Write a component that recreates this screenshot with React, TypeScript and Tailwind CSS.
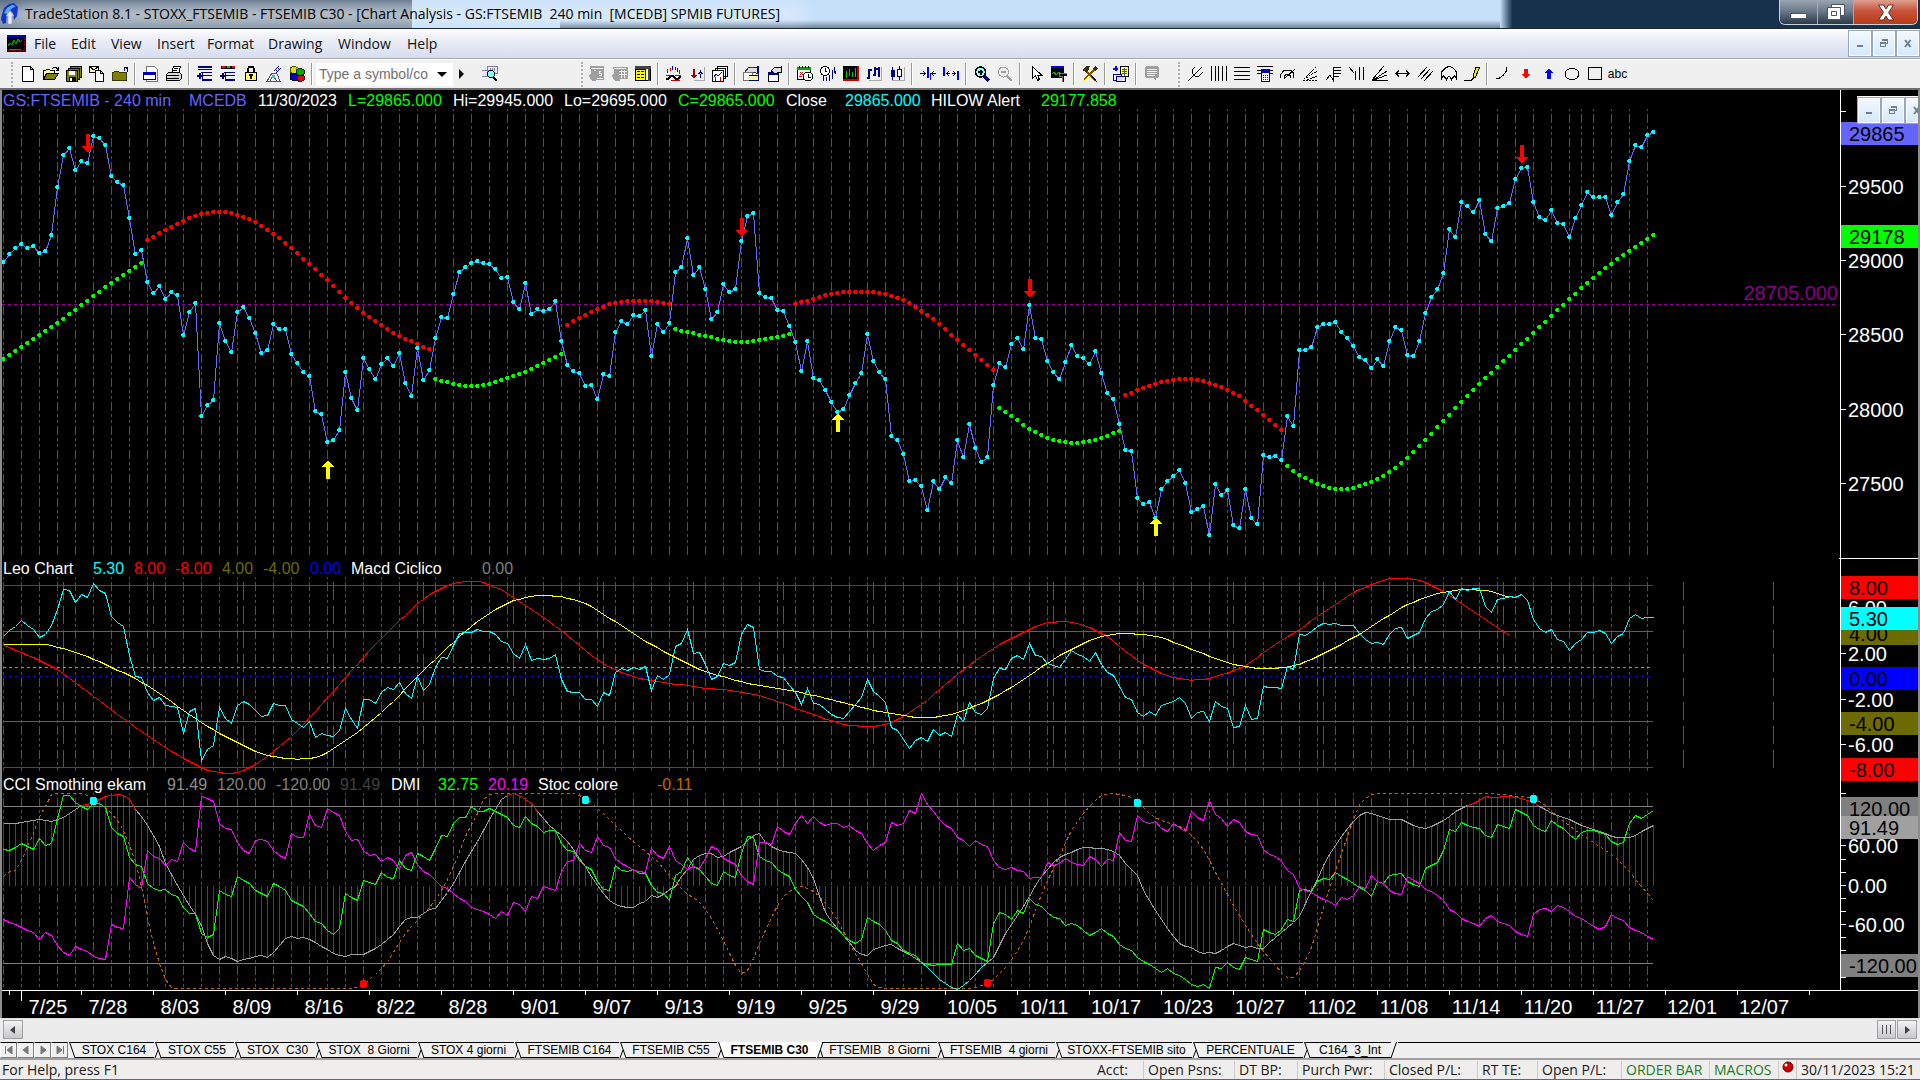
import React from "react";

/* ---------------------------------------------------------------- data */

const nums = (s: string) => s.trim().split(/\s+/).map(Number);

const CLOSE = nums(`
456 432 413 402 413 408 429 423 375 231 135 114 180 153 159 77 84 105 198 216 225 324 432 420 516 549 528 567 546 555
675 606 578 918 885 870 639 693 726 606 591 624 669 729 720 642 657 657 732 759 786 798 903 912 996 990 960 786 864 900
744 777 807 762 744 768 729 819 858 714 810 780 684 621 624 552 486 471 459 453 459 462 477 504 501 576 597 519 612 597
603 597 573 693 765 783 789 828 825 867 792 798 666 633 642 615 618 600 738 642 666 639 486 471 384 495 471 537 627 606
522 546 537 393 318 309 549 561 564 600 603 648 696 783 693 804 810 840 876 906 897 855 819 789 672 753 786 807 978 990
1032 1113 1110 1128 1200 1113 1137 1101 1119 990 1041 942 1014 1056 1041 825 759 771 702 684 717 585 684 687 753 786 807 756 705 738
744 762 723 789 849 867 942 1020 1023 1164 1182 1176 1224 1137 1113 1098 1080 1119 1206 1197 1188 1275 1122 1155 1140 1245 1254 1137 1224 1242
1035 1041 1038 1050 918 948 720 720 711 651 642 642 636 666 684 708 741 750 774 747 768 693 651 660 735 738 693 609 561 537
489 357 381 276 288 306 270 372 393 294 288 279 207 174 171 276 321 330 300 339 342 381 324 285 246 261 261 261 315 276
252 153 105 111 75 66`);

const HIGH_BANDS = [
  "24 390 27 360 30 333 33 312 36 306 38 309 39 315 42 336 45 372 48 414 51 462 54 510 57 564 60 609 63 645 66 678 69 702 71 717",
  "94 645 96 624 99 597 102 578 104 573 108 573 111 581",
  "132 581 135 567 138 552 141 546 145 546 148 558 150 570 153 603 156 642 159 690 162 735 165 780",
  "187 855 190 834 193 816 195 810 197 807 200 813 203 831 204 840 206 858 207 873 210 915 213 960",
].map(nums);

const LOW_BANDS = [
  "0 747 3 711 6 675 9 639 12 600 15 558 18 519 21 483 23 459",
  "72 807 75 822 77 828 79 828 81 822 84 804 87 786 90 759 93 732",
  "112 657 114 666 117 678 120 690 123 696 126 690 129 681 131 672",
  "166 894 168 918 171 957 174 984 176 993 178 999 180 996 183 984 186 963",
  "214 1068 216 1095 219 1122 221 1134 223 1137 225 1134 228 1116 231 1086 234 1044 237 990 240 933 243 876 246 822 249 771 252 720 255 669 258 618 261 567 264 519 267 474 271 423 275 375",
].map(nums);

const LEO = nums(`
241 223 211 193 209 222 245 236 210 160 102 105 140 117 124 84 106 113 182 200 212 300 362 363 410 434 424 448 450 455
533 466 457 613 580 568 455 486 502 447 437 445 463 480 478 443 447 447 489 503 515 495 545 531 539 542 524 457 489 517
431 429 442 408 393 399 378 411 428 361 403 384 336 306 308 270 234 229 231 222 226 227 237 256 262 292 309 265 315 309
312 309 295 370 406 410 408 431 429 452 410 417 350 339 344 336 341 332 402 357 371 356 272 263 222 294 291 326 370 360
322 328 320 237 206 216 341 345 345 361 363 387 410 446 396 442 444 459 475 485 486 466 446 425 370 405 421 438 515 523
550 577 554 545 557 521 538 528 542 475 497 438 468 474 456 367 338 342 308 299 312 263 300 301 322 330 336 310 283 295
302 316 291 325 348 359 390 424 429 470 481 465 479 449 443 436 423 441 488 468 467 497 435 450 456 515 510 448 491 486
390 393 393 396 331 340 237 240 228 212 203 207 204 210 208 210 232 250 262 259 265 235 217 215 249 240 229 188 167 162
146 108 130 98 104 99 98 152 171 130 128 122 125 117 134 190 217 231 220 250 256 284 262 252 231 231 225 232 264 242
234 188 177 189 184 184`);

const SLOW_CYCLE = nums(`
0 267 5 265 8 270 13 295 18 334 23 378 28 437 33 500 38 550 42 585 45 601 49 608 53 597 57 552 61 500 65 435 69 360 73 293
77 226 80 186 84 142 87 126 90 119 94 127 97 143 100 177 102 198 105 234 108 266 112 305 115 332 119 357 123 377 127 391
131 403 134 414 138 431 142 449 145 462 148 471 151 481 155 483 158 474 160 463 163 441 167 404 170 370 173 333 176 299
180 263 183 243 186 234 190 236 193 246 196 266 200 294 204 320 207 333 209 338 211 339 213 336 216 325 219 301 222 275
225 245 228 213 231 178 234 147 237 126 240 110 243 103 246 104 248 109 251 126`);

const FAST_CYCLE = nums(`
0 268 3 290 9 342 15 420 21 500 25 549 29 595 33 634 35 646 37 651 39 647 41 634 44 600 48 540 51 485 55 405 57 365 61 285
64 230 67 178 70 130 73 98 75 84 77 78 79 78 80 82 83 103 85 125 88 160 93 225 96 270 99 312 102 342 105 362 108 373
112 384 117 396 122 405 127 424 131 449 135 476 138 494 141 507 144 510 146 509 149 491 151 470 154 432 156 400 160 342
162 314 165 278 168 247 171 220 173 205 176 198 178 200 181 215 184 243 187 287 191 335 195 363 198 372 201 366 204 351
207 328 210 291 213 255 216 220 219 183 222 147 225 112 228 87 231 70 233 68 236 76 239 98 242 132 246 180 249 215 251 239`);

const CCI_KEYS = nums(`
0 802 3 798 6 790 8 794 10 782 13 748 15 738 17 719 19 715 20 718 21 728 22 758 24 805 26 870 27 920 29 985 31 1045 33 1105
34 1160 35 1195 36 1207 37 1198 38 1205 39 1212 40 1207 43 1196 44 1200 45 1185 47 1145 48 1139 49 1145 50 1142 51 1147
53 1167 55 1188 57 1199 58 1193 60 1193 61 1184 63 1162 65 1132 67 1087 69 1081 70 1070 71 1056 72 1055 73 1030 75 980
77 915 79 855 81 790 83 730 84 717 85 712 86 717 87 728 88 740 89 765 91 805 94 855 97 930 99 985 101 1030 102 1042
103 1048 105 1052 106 1039 107 1033 108 1017 109 1022 111 998 112 988 113 960 114 938 115 908 116 897 117 890 118 889
119 903 120 900 121 887 123 870 124 850 125 835 126 829 127 857 128 870 130 885 132 890 133 907 135 965 136 1020 137 1065
139 1115 141 1155 142 1180 144 1194 145 1176 146 1172 148 1163 149 1175 151 1193 153 1216 154 1230 156 1265 157 1279
159 1295 161 1268 163 1232 164 1217 165 1200 167 1130 169 1075 171 1020 172 985 174 938 176 903 178 888 180 873 182 874
184 878 186 897 187 920 189 957 190 1000 192 1060 194 1115 196 1158 198 1172 200 1190 201 1185 202 1190 204 1167 205 1160
207 1172 208 1168 210 1175 211 1155 213 1125 215 1095 216 1078 217 1040 218 1000 219 968 220 925 222 865 224 815 226 777
227 769 229 777 231 789 233 790 235 807 237 816 239 800 241 780 242 765 244 747 245 742 247 720 248 722 249 724 250 720
252 723 253 726 255 737 256 750 257 760 259 778 261 790 263 807 266 825 268 838 269 842 271 843 272 835 273 823 274 815 275 807`);

const DMI_PLUS = nums(`
877 880 872 861 870 878 846 867 860 785 716 716 738 750 760 740 742 752 812 830 840 902 922 930 980 995 1002 999 1012 1020
1052 1068 1068 1128 1140 1133 1002 1012 1020 958 970 980 1000 1011 1018 980 990 1000 1030 1040 1048 1070 1094 1100 1120 1132 1113 1010 1023 1030
972 976 984 948 963 965 910 935 941 890 900 911 875 835 838 800 784 783 749 765 766 755 765 775 783 805 813 780 800 810
828 820 822 860 880 884 910 930 938 975 997 1002 926 940 944 937 950 950 985 1007 1010 1030 957 945 902 928 937 958 980 985
944 955 961 890 838 843 900 910 916 938 950 960 997 1018 1037 1072 1085 1092 1105 1118 1135 1150 1158 1147 1080 1092 1103 1120 1150 1158
1180 1190 1196 1216 1222 1226 1222 1222 1222 1160 1179 1173 1195 1203 1213 1100 1067 1073 1088 1060 1068 1025 1043 1047 1067 1080 1085 1106 1100 1104
1120 1136 1125 1115 1130 1138 1162 1175 1180 1202 1214 1223 1235 1246 1233 1250 1256 1265 1280 1287 1280 1294 1230 1234 1217 1230 1237 1200 1208 1214
1118 1127 1133 1117 1088 1094 1000 998 1004 973 965 968 948 958 967 980 993 1000 1018 975 980 955 953 950 973 983 989 935 927 916
882 818 825 798 807 813 814 835 843 803 810 816 760 768 776 805 817 825 793 807 815 833 848 828 820 820 827 832 853 862
856 800 778 787 773 763`);

const DMI_MINUS = nums(`
1088 1096 1102 1112 1120 1125 1147 1127 1136 1165 1187 1194 1167 1178 1183 1197 1205 1206 1102 1110 1115 963 983 994 882 898 906 925 907 913
856 876 884 720 726 735 800 816 818 857 880 890 850 847 853 880 895 906 830 842 842 775 807 813 755 768 777 825 850 847
882 896 892 914 903 910 937 897 886 922 945 952 972 990 995 1010 1024 1033 1052 1058 1063 1072 1083 1063 1074 1037 1043 1063 1020 1024
988 995 1001 945 913 910 861 880 888 838 866 873 905 920 930 942 945 947 875 897 904 870 912 922 938 930 934 905 870 878
905 915 923 955 974 982 858 856 862 808 825 832 800 778 802 780 798 807 802 802 812 805 820 830 860 880 866 857 798 806
800 763 770 712 745 765 788 806 815 842 850 870 850 862 870 910 933 938 931 940 943 966 961 963 916 925 920 906 916 924
926 898 908 928 907 911 828 850 855 778 795 802 795 815 825 802 813 825 766 784 792 733 773 785 810 790 797 824 832 835
878 892 898 915 942 952 995 1002 1008 1018 1028 1034 1046 1023 1028 1017 990 996 956 975 980 1000 1010 1014 960 972 980 998 1005 1016
1030 1057 1065 1085 1092 1098 1109 1085 1074 1093 1100 1106 1123 1133 1137 1073 1058 1053 1064 1046 1050 1064 1077 1085 1095 1107 1117 1108 1071 1084
1090 1110 1120 1125 1138 1146`);

const STOCH = nums(`
0 960 1 945 2 940 3 910 4 870 5 830 6 780 7 750 8 715 9 712 13 712 15 725 16 740 18 770 20 820 21 865 22 915 23 990 24 1080
25 1160 26 1220 27 1265 28 1290 29 1294 58 1294 60 1280 63 1235 65 1185 67 1130 69 1090 71 1050 73 1000 75 930 77 840 79 770
80 730 81 715 83 712 95 712 97 725 99 755 102 805 106 870 109 915 112 975 114 1012 116 1035 118 1085 120 1150 122 1225
123 1250 124 1240 126 1160 128 1080 130 1020 132 993 133 990 135 1003 137 1040 139 1090 141 1160 143 1220 145 1280 147 1294
160 1294 164 1278 167 1230 170 1150 172 1060 174 970 176 900 178 820 181 750 183 718 185 712 187 716 189 735 191 770
193 793 196 808 198 835 200 878 203 980 206 1075 209 1160 212 1225 214 1262 215 1260 216 1240 218 1170 220 1050 222 940
224 840 226 745 228 715 229 712 248 712 252 720 255 725 257 748 259 780 262 820 265 858 268 893 271 945 273 990 275 1030`);

/* ---------------------------------------------------------------- geometry */

const bx = (i: number) => 3 + 6 * i;
const priceY = (v: number) => Math.round(110 + v / 3);
const oscY = (v: number) => Math.round(555 + v / 2.987);

/* Hermite interpolation of "index value index value ..." keys at every bar */
function fill(keys: number[]): [number, number][] {
  const n = keys.length / 2;
  const xs = Array.from({ length: n }, (_, k) => keys[2 * k]);
  const ys = Array.from({ length: n }, (_, k) => keys[2 * k + 1]);
  const slope = (k: number) => {
    const a = Math.max(0, k - 1);
    const b = Math.min(n - 1, k + 1);
    return (ys[b] - ys[a]) / (xs[b] - xs[a]);
  };
  const out: [number, number][] = [];
  for (let k = 0; k < n - 1; k++) {
    const h = xs[k + 1] - xs[k];
    const flat = ys[k] === ys[k + 1];
    const m0 = flat ? 0 : slope(k);
    const m1 = flat ? 0 : slope(k + 1);
    for (let i = xs[k]; i < xs[k + 1]; i++) {
      const t = (i - xs[k]) / h;
      const t2 = t * t;
      const t3 = t2 * t;
      out.push([
        i,
        (2 * t3 - 3 * t2 + 1) * ys[k] + (t3 - 2 * t2 + t) * h * m0 + (3 * t2 - 2 * t3) * ys[k + 1] + (t3 - t2) * h * m1,
      ]);
    }
  }
  out.push([xs[n - 1], ys[n - 1]]);
  return out;
}

const line = (pts: [number, number][], y: (v: number) => number) =>
  "M" + pts.map(([i, v]) => `${bx(i) + 0.5} ${y(v) + 0.5}`).join("L");
const indexed = (vals: number[]): [number, number][] => vals.map((v, i) => [i, v]);
const dots = (pts: [number, number][]) =>
  pts.map(([i, v]) => `M${bx(i) - 1} ${priceY(v) - 2}h3v4h-3zM${bx(i) - 2} ${priceY(v) - 1}h1v2h-1z`).join("");

const CCI = fill(CCI_KEYS);
const GRID = [
  ...Array.from({ length: 88 }, (_, k) => 3 * k),
  263, 265, 268, 271, 274,
];

function Grid({ top, bottom, phase }: { top: number; bottom: number; phase: number }) {
  return (
    <path
      d={GRID.map((i) => `M${bx(i) + 0.5} ${top}V${bottom}`).join("")}
      stroke="#505050"
      strokeDasharray="9 3 3 3 3 3"
      strokeDashoffset={phase}
    />
  );
}

const down = (x: number, y: number) => `M${x - 2} ${y}h4v12h4l-6 7l-6 -7h4z`;
const up = (x: number, y: number) => `M${x} ${y}l6 7h-4v12h-4v-12h-4z`;

/* ---------------------------------------------------------------- chart */

type Item = [text: string, color: string, width: string];

function Legend({ items }: { items: Item[] }) {
  return (
    <div className="flex h-[19px] items-center overflow-hidden whitespace-pre pl-px text-base leading-[21px]">
      {items.map(([text, color, width], i) => (
        <span key={i} className={`shrink-0 pt-px ${color} ${width}`}>
          {text}
        </span>
      ))}
    </div>
  );
}

function Plot({ top, height, label, children }: { top: number; height: number; label: string; children: React.ReactNode }) {
  return (
    <svg className="block w-full" height={height} role="img" aria-label={label} shapeRendering="crispEdges" fill="none">
      <g transform={`translate(-2 ${-top})`}>{children}</g>
    </svg>
  );
}

type Badge = { y: number; text: string; fill: string };

function Axis({ top, height, ticks, minor = [], badges, divider }: {
  top: number; height: number; ticks: [number, string][]; minor?: number[]; badges: Badge[]; divider?: boolean;
}) {
  return (
    <svg className="relative block w-[79px] shrink-0 overflow-visible" height={height} shapeRendering="crispEdges">
      <g transform={`translate(0 ${-top})`}>
        <path d={`M1.5 ${top}v${height}`} stroke="#fff" />
        {divider && <path d={`M0 ${top + height + 0.5}h79`} stroke="#fff" />}
        {minor.map((y) => <path key={y} d={`M2 ${y + 0.5}h5`} stroke="#fff" />)}
        {ticks.map(([y, t]) => (
          <g key={t}>
            <path d={`M2 ${y + 0.5}h5`} stroke="#fff" />
            <text x="9" y={y + 8} fill="#fff" fontSize="20">{t}</text>
          </g>
        ))}
        {badges.map((b) => (
          <g key={b.y}>
            <rect x="2" y={b.y} width="77" height="23" fill={b.fill} />
            <text x="10" y={b.y + 19} fill="#000" fontSize="20">{b.text}</text>
          </g>
        ))}
      </g>
    </svg>
  );
}

const DATES = "7/28 8/03 8/09 8/16 8/22 8/28 9/01 9/07 9/13 9/19 9/25 9/29 10/05 10/11 10/17 10/23 10/27 11/02 11/08 11/14 11/20 11/27 12/01 12/07".split(" ");

function MdiButtons({ className }: { className: string }) {
  const cls = "flex h-[27px] w-6 shrink-0 items-center justify-center border border-[#98a9bc] bg-linear-to-b from-[#f4f9ff] to-[#d3e8fb] outline-1 -outline-offset-2 outline-white/70";
  return (
    <div className={`flex ${className}`}>
      <button aria-label="Minimize chart" className={cls}>
        <svg width="10" height="9" shapeRendering="crispEdges"><path d="M2 6h6v2h-6z" fill="#6d8094" /></svg>
      </button>
      <button aria-label="Restore chart" className={cls}>
        <svg width="10" height="9" shapeRendering="crispEdges" fill="none" stroke="#6d8094">
          <path d="M3.5 2V.5h5v4H7M3 1.5h6" /><path d="M1.5 3.5h5v4h-5zM1 4.500h6" />
        </svg>
      </button>
      <button aria-label="Close chart" className={cls}>
        <svg width="10" height="9" fill="none" stroke="#6d8094" strokeWidth="2"><path d="M2 1l5.500 7M7.500 1l-5.500 7" /></svg>
      </button>
    </div>
  );
}

function Chart() {
  const cciColor = (a: number, b: number) => line(CCI.filter(([i]) => i >= a && i <= b), oscY);
  return (
    <main className="relative border-x-2 border-[#8c8c8c] bg-black">
      <MdiButtons className="absolute top-[6px] right-0 z-10 w-[61px] overflow-hidden border-t border-white" />
      <section className="flex">
        <div className="min-w-0 flex-1">
          <Legend items={[
            ["GS:FTSEMIB - 240 min", "text-[#6464ff]", "w-[186px]"],
            ["MCEDB", "text-[#6464ff]", "w-[69px]"],
            ["11/30/2023", "text-white", "w-[90px]"],
            ["L=29865.000", "text-[#00ff00]", "w-[105px]"],
            ["Hi=29945.000", "text-white", "w-[111px]"],
            ["Lo=29695.000", "text-white", "w-[114px]"],
            ["C=29865.000", "text-[#00ff00]", "w-[108px]"],
            ["Close", "text-white", "w-[59px]"],
            ["29865.000", "text-[#00ffff]", "w-[86px]"],
            ["HILOW Alert", "text-white", "w-[110px]"],
            ["29177.858", "text-[#00ff00]", "w-[90px]"],
          ]} />
          <Plot top={109} height={449} label="FTSEMIB 240 minute close">
            <Grid top={109} bottom={556} phase={19} />
            <path d="M2 304.500H1838" stroke="#990099" strokeDasharray="3 3" />
            <path d={line(indexed(CLOSE), priceY)} stroke="#6a6aff" />
            {HIGH_BANDS.map((k, i) => <path key={i} d={dots(fill(k))} fill="#ff0000" />)}
            {LOW_BANDS.map((k, i) => <path key={i} d={dots(fill(k))} fill="#00ff00" />)}
            <path d={dots(indexed(CLOSE))} fill="#00ffff" />
            <path d={down(88, 134) + down(742, 218) + down(1030, 279) + down(1522, 145)} fill="#ff0000" />
            <path d={up(328, 460) + up(838, 413) + up(1156, 517)} fill="#ffff00" />
            <text x="1838" y="300" textAnchor="end" fontSize="20" fill="#880088">28705.000</text>
          </Plot>
        </div>
        <Axis top={90} height={468} divider minor={[111]}
          ticks={[[186, "29500"], [260, "29000"], [334, "28500"], [409, "28000"], [483, "27500"]]}
          badges={[{ y: 122, text: "29865", fill: "#6464ff" }, { y: 225, text: "29178", fill: "#00ff00" }]} />
      </section>

      <section className="flex">
        <div className="min-w-0 flex-1">
          <Legend items={[
            ["Leo Chart", "text-white", "w-[90px]"],
            ["5.30", "text-[#00ffff]", "w-[41px]"],
            ["8.00", "text-[#ff0000]", "w-[41px]"],
            ["-8.00", "text-[#ff0000]", "w-[47px]"],
            ["4.00", "text-[#6b6b00]", "w-[41px]"],
            ["-4.00", "text-[#6b6b00]", "w-[47px]"],
            ["0.00", "text-[#0000ff]", "w-[41px]"],
            ["Macd Ciclico", "text-white", "w-[131px]"],
            ["0.00", "text-[#808080]", "w-[41px]"],
          ]} />
          <Plot top={577} height={197} label="Leo Chart and Macd Ciclico">
            <Grid top={577} bottom={771} phase={19} />
            <path d={Array.from({ length: 20 }, (_, k) => `M${63.5 + 90 * k} 582V768`).join("")} stroke="#007878" strokeDasharray="18 6" />
            <path d="M3 667.500H1653" stroke="#909090" strokeDasharray="3 3" />
            <path d="M3 676.500H1653" stroke="#0000ff" strokeDasharray="3 3" />
            <path d="M3 631.500H1653M3 721.500H1653" stroke="#6b6b00" />
            <path d="M3 585.500H1653M3 767.500H1653" stroke="#ff0000" />
            <path d={line(fill(FAST_CYCLE), oscY)} stroke="#ff0000" />
            <path d={line(fill(SLOW_CYCLE), oscY)} stroke="#ffff00" />
            <path d={line(indexed(LEO), oscY)} stroke="#00ffff" />
          </Plot>
        </div>
        <Axis top={558} height={216}
          ticks={[[607, "6.00"], [653, "2.00"], [699, "-2.00"], [744, "-6.00"]]}
          badges={[
            { y: 576, text: "8.00", fill: "#ff0000" }, { y: 622, text: "4.00", fill: "#6b6b00" },
            { y: 607, text: "5.30", fill: "#00ffff" }, { y: 667, text: "0.00", fill: "#0000ff" },
            { y: 712, text: "-4.00", fill: "#6b6b00" }, { y: 758, text: "-8.00", fill: "#ff0000" },
          ]} />
      </section>

      <section className="flex">
        <div className="min-w-0 flex-1">
          <Legend items={[
            ["CCI Smothing ekam", "text-white", "w-[164px]"],
            ["91.49", "text-[#909090]", "w-[50px]"],
            ["120.00", "text-[#808080]", "w-[59px]"],
            ["-120.00", "text-[#808080]", "w-[64px]"],
            ["91.49", "text-[#404040]", "w-[51px]"],
            ["DMI", "text-white", "w-[47px]"],
            ["32.75", "text-[#00ff00]", "w-[50px]"],
            ["20.19", "text-[#ff00ff]", "w-[50px]"],
            ["Stoc colore", "text-white", "w-[119px]"],
            ["-0.11", "text-[#c86400]", "w-[50px]"],
          ]} />
          <Plot top={793} height={197} label="CCI Smothing, DMI and Stoc colore">
            <Grid top={793} bottom={987} phase={19} />
            <path d={CCI.map(([i, v]) => `M${bx(i) + 0.5} 885.500V${oscY(v)}`).join("")} stroke="#454545" />
            <path d="M3 806.500H1653M3 963.500H1653" stroke="#808080" />
            <path d={line(fill(STOCH), oscY)} stroke="#c86400" strokeDasharray="3 3" />
            <path d={line(CCI, oscY)} stroke="#a0a0a0" />
            <path d={cciColor(13, 22) + cciColor(84, 89) + cciColor(244, 256)} stroke="#ff0000" />
            <path d={cciColor(153, 164)} stroke="#00ffff" />
            <path d={line(indexed(DMI_PLUS), oscY)} stroke="#00ff00" />
            <path d={line(indexed(DMI_MINUS), oscY)} stroke="#ff00ff" />
            {[[93, 801], [585, 800], [1137, 803], [1533, 799]].map(([x, y]) => <circle key={x} cx={x + 0.5} cy={y} r="4" fill="#00ffff" />)}
            {[[363, 984], [987, 983]].map(([x, y]) => <circle key={x} cx={x + 0.5} cy={y} r="4" fill="#ff0000" />)}
          </Plot>
        </div>
        <Axis top={774} height={216} minor={[793, 859, 872, 898, 911, 937, 950, 977]}
          ticks={[[845, "60.00"], [885, "0.00"], [924, "-60.00"]]}
          badges={[
            { y: 797, text: "120.00", fill: "#808080" }, { y: 816, text: "91.49", fill: "#a0a0a0" },
            { y: 954, text: "-120.00", fill: "#808080" },
          ]} />
      </section>

      <svg className="block w-full" height="28" shapeRendering="crispEdges" fontSize="20" fill="#fff" textAnchor="middle" role="img" aria-label="Time axis">
        <g transform="translate(-2 -990)">
          <path d="M2 990.500H1920M9.500 991v4M21.500 991v10M1809.500 991v4" stroke="#fff" />
          <text x="48" y="1014">7/25</text>
          {DATES.map((d, k) => (
            <g key={d}>
              <path d={`M${81.5 + 72 * k} 991v4`} stroke="#fff" />
              <text x={108 + 72 * k} y="1014">{d}</text>
            </g>
          ))}
        </g>
      </svg>
    </main>
  );
}

/* ---------------------------------------------------------------- toolbar icons (16 x 16) */

const K = "#000";
const N = "#000080";
const Y = "#808000";
const G = "#a0a0a0";

const ICONS: Record<string, React.ReactNode> = {
  "New": <path d="M2.500.5h8l3 3v12h-11zM10.500.5v3h3" fill="#fff" stroke={K} />,
  "Open": <><path d="M.5 13.500v-9h2l1-1h3l1 1h4v3" fill="#ffff9a" stroke={K} /><path d="M.5 13.500l3-6h12l-4 6z" fill={Y} stroke={K} /><path d="M9 2.500l2-1h2l2 2M15.500 1v3h-3" fill="none" stroke={K} /></>,
  "Save all": <><path d="M4.500.5h11v11h-11z" fill={Y} stroke={K} /><path d="M2.500 2.500h11v11h-11z" fill={Y} stroke={K} /><path d="M.5 4.500h11v11h-11z" fill={Y} stroke={K} /><path d="M3 5h6v4h-6z" fill="#fff" /><path d="M3 11h7v5h-7z" fill={K} /><path d="M4 12h2v3h-2z" fill="#fff" /></>,
  "Mail": <><path d="M.5.5h9v6h-9zM1 1l4 3l4-3" fill="#ffffb0" stroke={K} /><path d="M6.500 4.500h5l3 3v8h-8zM11.500 4.500v3h3" fill="#fff" stroke={K} /></>,
  "Folder": <><path d="M.5 14.500v-8h1l1-1h4l1 1h7v8z" fill={Y} stroke="#3a3a00" /><path d="M15.500 6V2M12.500 4.500V1.500h3M13 1l3 3" fill="none" stroke={N} /></>,
  "Window page": <><path d="M3.500.5h8l3 3v12h-11z" fill="#fff" stroke="#777" /><path d="M.5 6.500h12v7H.5z" fill="#fff" stroke={N} /><path d="M0 6h13v3H0z" fill="#0000c0" /></>,
  "Print": <><path d="M5.500 7.500l2-7h7l-2 7z" fill="#fff" stroke={K} /><path d="M8 2.500h4M7 4.500h4" stroke={K} /><path d="M.5 8.500l2-2h11l2 2v4l-2 2H.5z" fill="#d8d8d8" stroke={K} /><path d="M1 9.500h12M1 12.500h12" stroke={K} /><path d="M8 11h3v1H8z" fill="#cc0" /></>,
  "Arrange up": <><path d="M1 0h14v2H1zM1 3h14v1H1z" fill={N} /><path d="M3.500 6.500h11M6 9.500h9M5.500 7v7.500H15" stroke={N} fill="none" /><path d="M0 9h5v2H0zM2 7h2v6H2zM5 13h10v2H5z" fill={N} /></>,
  "Arrange colors": <><path d="M1 0h14v3H1z" fill={K} /><path d="M2 0h3v2H2zM12 0h3v2h-3z" fill="#f00" /><path d="M7 0h3v2H7z" fill="#0c0" /><path d="M3.500 6.500h11M6 9.500h9M5.500 7v7.500H15" stroke={N} fill="none" /><path d="M0 9h5v2H0zM2 7h2v6H2zM5 13h10v2H5z" fill={N} /></>,
  "Lock": <><path d="M5 7V3l1-2h4l1 2v4" fill="none" stroke={K} strokeWidth="1.500" /><path d="M2.500 6.500h11v8h-11z" fill="#ffff60" stroke={K} /><path d="M6 8h4v2H9v3H7v-3H6z" fill={K} /></>,
  "Satellite": <><path d="M8 5l5-5M10 7l5-5M9 3l3 3M11 1l3 3" stroke={N} /><path d="M1 15l5-8l5 1l3 7M0 15.500h15M4 15l3-5l4 5" fill="none" stroke="#555" /><path d="M6 9h3v3H6z" fill="#40c0c0" /></>,
  "Modules": <><path d="M1 2l4-2l4 2v4l-4 2l-4-2z" fill="#dd0" stroke="#550" /><path d="M7 4l4-2l4 2v4l-4 2l-4-2z" fill="#0a0" stroke="#030" /><path d="M1 8l4-1l4 2v5l-4 1l-4-2z" fill="#00c" stroke="#004" /><path d="M8 10l4-1l3 1v4l-4 2l-3-2z" fill="#e00" stroke="#400" /></>,
  "Find symbol": <><path d="M5.500.5h10v7h-10zM0 4.500h6v6H0M8 2v3M10 2v3M12 2v3" fill="#e8e8ff" stroke="#8080a0" /><circle cx="9" cy="8" r="3.500" fill="#80ffff" stroke={K} /><path d="M11 11l4 4" stroke={K} strokeWidth="2" /></>,
  "Quote disabled": <><path d="M1 0h14v14H7v1H3l-3-5l2-3V5z" fill={G} /><path d="M2 2.500h12M5 4.500h2M8 12.500h6M12 5h-2v2h2v2h-2" stroke="#f4f4f4" fill="none" /></>,
  "Grid disabled": <><path d="M1 1h15v12H8v2H3l-3-5l2-3V5z" fill={G} /><path d="M2 2.500h12M7 5.500h8M7 8.500h8M9.500 4v8M12.500 4v8" stroke="#f4f4f4" /></>,
  "Data window": <><path d="M.5.5h15v14H.5z" fill="#fff" stroke={K} /><path d="M0 0h16v3H0zM13 3h2v12h-2z" fill="#444" /><path d="M1 4h10v11H1z" fill="#ff0" /><path d="M.5 3.500h10v11H.5zM2 5.500h3M6 5.500h3M2 8.500h3M6 8.500h3M2 11.500h3M6 11.500h3" fill="none" stroke={K} /></>,
  "Indicator": <><path d="M1.500 3v4M4.500 2v3M13.500 4v4" stroke="#c00" /><path d="M6.500 0v4M9.500 1v3M11.500 2v4" stroke="#00c" /><path d="M0 13h2l3-3h2l3 3h2l2-2h1" fill="none" stroke={K} strokeWidth="1.500" /><path d="M0 9.500h5M9 9.500h6M5 14.500h9" stroke="#c00" /></>,
  "Signals": <><path d="M2 9h6l-3 4zM4 3h2v7H4z" fill="#a00000" /><path d="M9 8h5l-2.500-4zM11 7h1v5h-1z" fill={N} /><path d="M15.500 1v14M5 14.500h10" stroke="#aaa" /></>,
  "Study group": <><path d="M5.500.5h10v10h-10zM3.500 2.500h10v10h-10z" fill="#fff" stroke={K} /><path d="M.5 4.500h11v11H.5z" fill="#fff" stroke={K} /><path d="M2 11l2-3l2 2l4-4" stroke="#00f" fill="none" /><path d="M3.500 11v4M8.500 11v4" stroke="#c00" /></>,
  "Format window": <><path d="M1 7l5-6h9v7l-4-2l-4 4z" fill="#ddd" stroke="#333" /><path d="M.5 6.500h9v8h-9z" fill="#fff" stroke="#777" /><path d="M6 9.500h9v5H6" fill="#ff9" stroke={N} /><path d="M14 0h2v7h-2z" fill={N} /></>,
  "Format page": <><path d="M2.500 6.500h10v9h-10z" fill="#fff" stroke={K} /><path d="M2 6h11v3H2z" fill={N} /><path d="M5 5l4-4h7v5h-3l-3 2z" fill="#ddd" stroke={K} /><path d="M15 0h1v6h-1z" fill={N} /></>,
  "Calendar": <><path d="M.5 2.500h13v11H.5z" fill="#fff" stroke={K} /><path d="M0 1h14v3H0z" fill="#0a0" /><path d="M2.500 0v2M5.500 0v2M8.500 0v2M11.500 0v2" stroke={K} /><path d="M3 6l3 3M6 6l-3 3M2 10h3" stroke="#c00" /><circle cx="11" cy="10.500" r="4.500" fill="#fff" stroke={K} /><path d="M11 8v3h3" fill="none" stroke={K} /></>,
  "Clock bars": <><circle cx="5" cy="5" r="4.500" fill="#fff" stroke={K} /><path d="M5 2v3h2" fill="none" stroke={K} /><path d="M3.500 10v5M6.500 11v4M9.500 9v6M12.500 4v9M14.500 1v6M15.500 5v3" stroke={N} /></>,
  "Bar style": <><path d="M0 0h16v15H0z" fill={K} /><path d="M3.500 5v7M6.500 3v7M9.500 6v5M12.500 2v9" stroke="#0c0" /><path d="M14 0h2v15h-2zM0 13h16v2H0z" fill="#d00000" /></>,
  "Bars": <><path d="M3 3v10M1 11.500h2M3 4h3M9 1v9M7 8.500h2M9 2.500h3M12.500 1v10" stroke={N} strokeWidth="2" /><path d="M15.500 1v14M3 14.500h12" stroke="#aaa" /></>,
  "Candles": <><path d="M3.500 1v13" stroke={N} /><path d="M2 4h4v7H2z" fill={N} /><path d="M10.500 0v3M10.500 10v4M8.500 3.500h4v7h-4z" stroke={N} fill="#fff" /><path d="M15.500 1v14M3 14.500h12" stroke="#aaa" /></>,
  "Compress bars": <><path d="M7.500 1v11" stroke="#00f" strokeWidth="2" /><path d="M10.500 7v7" stroke="#00f" /><path d="M0 7.500h5M11 7.500h5M3 5l2 2.500l-2 2.500M14 5l-2 2.500l2 2.500" fill="none" stroke={K} /></>,
  "Expand bars": <><path d="M1 1v9M14.500 5v9" stroke="#00f" strokeWidth="2" /><path d="M4 7.500h3M9 7.500h4M6 5l-2 2.500l2 2.500M10 5l2 2.500l-2 2.500" fill="none" stroke={K} /></>,
  "Zoom in": <><path d="M10 10l5 5" stroke={N} strokeWidth="3" /><circle cx="6.500" cy="6" r="5" fill="#80ffff" stroke={K} strokeWidth="1.500" /><path d="M4 6h5M6.500 3.500v5" stroke={K} strokeWidth="2" /></>,
  "Zoom out": <><path d="M10 10l5 5" stroke={G} strokeWidth="2" /><circle cx="6.500" cy="6" r="5" fill="#eee" stroke={G} /><path d="M4 6h5" stroke={G} strokeWidth="2" /></>,
  "Pointer": <path d="M4.500.5v12l3-3l2 5l2-1l-2-4.500h4z" fill="#fff" stroke={K} />,
  "Text tool": <><path d="M0 0h13v12H0z" fill={K} /><path d="M0 0h13v2H0z" fill="#00f" /><path d="M1 8l2-2l2 3l3-3l2 2" stroke="#0c0" fill="none" /><path d="M8 7h8v3h-3v6h-2v-6H8z" fill={K} stroke="#eee" strokeWidth=".5" /></>,
  "Tools": <><path d="M5 6l9 9M2 14L12 4" stroke="#7a5200" strokeWidth="2" /><path d="M0 4l4-4h4l-1 3l-3 3zM11 2l3-2l2 3l-3 2z" fill="#3c3000" /><path d="M7 10l-5 5" stroke="#ff0" /><path d="M9 9l6 7" stroke={K} /></>,
  "Add window": <><path d="M0 2.500h5M2.500 0v5" stroke="#00f" strokeWidth="2" /><path d="M7.500.5h8v10h-8z" fill="#ffff60" stroke={K} /><path d="M9 3.500h5M9 5.500h5M9 7.500h5M11.500 2v8" stroke="#555" /><path d="M.5 8.500h8v6h-8z" fill="#fff" stroke={N} /><path d="M3 10.500h9v5H3z" fill="#ddf" stroke={N} /></>,
  "Notes disabled": <><path d="M2 0h12l1 2v9l-3 1v3l-3-3H2l-1-2V2z" fill={G} /><path d="M3 3.500h10M3 5.500h10M3 7.500h10M3 9.500h8" stroke="#f0f0f0" /></>,
  "Pitchfork": <path d="M0 15L9 6M7 1L4 4v3l3 3h4l4-4M9 6l5-5" fill="none" stroke={K} />,
  "Vertical lines": <path d="M.5 0v15M4.500 0v15M7.500 0v15M11.500 0v15M15.500 0v15" stroke={K} />,
  "Horizontal lines": <path d="M0 1.500h16M0 5.500h16M0 9.500h16M0 13.500h16" stroke={K} />,
  "Calculator": <><path d="M0 .5h16M0 4.500h16M0 7.500h16" stroke={K} /><path d="M4.500 3.500h8v12h-8z" fill="#fff" stroke={N} /><path d="M5 4h7v3H5z" fill="#00c" /><path d="M6 9.500h6M6 11.500h6M6 13.500h6" stroke="#00c" strokeDasharray="1 1" /></>,
  "Speed arcs": <path d="M.5 12V9l3-4l4-1h3l3 3v5M4.500 12v-2l2-2h2l2 2v2M4 13L15 3" fill="none" stroke={K} />,
  "Dotted fan": <path d="M0 14.500h15M1 13L14 0M3 12l11-7M4 14l10-4" stroke={K} fill="none" strokeDasharray="2 1" />,
  "Price steps": <path d="M0 14l4-5l3 5V1M8 1.500h7M8 4.500h7M8 7.500h7M8 10.500h5" fill="none" stroke={K} />,
  "Time lines": <path d="M0 1l5 6M6.500 5v9M10.500 1v13M14.500 1v13" stroke={K} />,
  "Fan": <path d="M0 14.500h16M0 14L12 0M1 14L15 5M2 14l13-5" stroke={K} fill="none" />,
  "Extend": <path d="M1 7.500h13M4 4.500L1 7.500l3 3M11 4.500l3 3l-3 3" fill="none" stroke={K} strokeWidth="1.500" />,
  "Parallel": <path d="M0 11L9 1M3 13L12 3M6 15L15 5" stroke={K} />,
  "Arc cycles": <path d="M.5 14V6l4-4l3-1.500h1L12 2l3.500 4v8M.5 12l2-2l3 3l2.500-3l2.500 3l3-3l2 2M5.500 12v3M10.500 12v3" fill="none" stroke={K} />,
  "Pencil": <><path d="M0 14.500h7l3-3" fill="none" stroke={K} /><path d="M9 10l3-9h3v2l-4 9z" fill="#ee0" stroke={K} /></>,
  "Arc": <path d="M11.500 1v4l-3 4l-4 3h-4" fill="none" stroke={K} />,
  "Down arrow": <path d="M6 3h4v5h2l-4 5l-4-5h2z" fill="#f00" />,
  "Up arrow": <path d="M8 2l4 5h-2v6H6V7H4z" fill="#00f" />,
  "Ellipse": <ellipse cx="8" cy="8" rx="7" ry="5.500" fill="none" stroke={K} />,
  "Rectangle": <path d="M1.500 1.500h13v12h-13z" fill="none" stroke={K} />,
};

function Tool({ name }: { name: string }) {
  return (
    <button aria-label={name} className="flex h-[28px] w-[23px] shrink-0 items-center justify-center">
      <svg width="16" height="16" shapeRendering="crispEdges">{ICONS[name]}</svg>
    </button>
  );
}

function Tools({ groups }: { groups: string[][] }) {
  return (
    <>
      {groups.map((g, i) => (
        <React.Fragment key={i}>
          {i > 0 && <Separator />}
          {g.map((n) => <Tool key={n} name={n} />)}
        </React.Fragment>
      ))}
    </>
  );
}

const Separator = () => <span className="mx-[3px] h-[22px] w-[2px] shrink-0 border-l border-[#9a9a9a] bg-white" />;
const Handle = () => <span className="h-[25px] w-[2px] shrink-0 border-l-2 border-dotted border-[#b0b0b0]" />;

function Toolbar() {
  return (
    <div className="flex h-[31px] items-center overflow-hidden border-t border-b-2 border-t-white border-b-[#6e6e6e] bg-[#f0f0f0]">
      <div className="flex w-[581px] shrink-0 items-center pl-[11px]">
        <Handle />
        <span className="w-[3px] shrink-0" />
        <Tools groups={[["New", "Open", "Save all", "Mail", "Folder"], ["Window page", "Print"], ["Arrange up", "Arrange colors", "Lock", "Satellite", "Modules"]]} />
        <Separator />
        <div className="flex h-[23px] w-[137px] shrink-0 items-center bg-white">
          <input aria-label="Symbol" placeholder="Type a symbol/co" className="h-full w-[114px] bg-transparent pl-[3px] text-sm outline-none placeholder:text-[#707070]" />
          <button aria-label="Symbol history" className="flex h-full flex-1 items-center justify-center">
            <svg width="10" height="5"><path d="M0 0h10l-5 5z" /></svg>
          </button>
        </div>
        <button aria-label="Apply symbol" className="flex h-[23px] w-[25px] shrink-0 items-center pl-[6px]">
          <svg width="5" height="10"><path d="M0 0l5 5l-5 5z" /></svg>
        </button>
        <Tool name="Find symbol" />
      </div>
      <div className="flex w-[597px] shrink-0 items-center">
        <Handle />
        <span className="w-[2px] shrink-0" />
        <Tools groups={[
          ["Quote disabled", "Grid disabled", "Data window"], ["Indicator", "Signals", "Study group"], ["Format window", "Format page"],
          ["Calendar", "Clock bars", "Bar style", "Bars", "Candles"], ["Compress bars", "Expand bars"], ["Zoom in", "Zoom out"],
          ["Pointer", "Text tool"], ["Tools"], ["Add window"], ["Notes disabled"],
        ]} />
      </div>
      <Handle />
      <span className="w-1 shrink-0" />
      <Tools groups={[
        ["Pitchfork", "Vertical lines", "Horizontal lines", "Calculator", "Speed arcs", "Dotted fan", "Price steps", "Time lines", "Fan", "Extend", "Parallel", "Arc cycles", "Pencil"],
        ["Arc", "Down arrow", "Up arrow", "Ellipse", "Rectangle"],
      ]} />
      <button className="w-[23px] shrink-0 text-center text-xs">abc</button>
    </div>
  );
}

/* ---------------------------------------------------------------- window frame */

function TitleBar() {
  return (
    <header className="relative flex h-[29px] items-center overflow-hidden border-b border-[#1c2836] bg-[#c6e0fa]">
      <div className="absolute inset-y-0 left-0 w-[412px] bg-linear-to-b from-[#5d7188] via-[#94a3b3] to-[#8091a3]" />
      <div className="absolute bottom-0 left-[560px] h-2 w-[940px] bg-linear-to-t from-[#6e8296] to-transparent" />
      <div className="absolute inset-y-0 right-0 w-[420px] bg-linear-to-r from-[#c6e0fa] from-0% to-[#17304b] to-3%" />
      <div className="absolute inset-y-1 left-4 w-[790px] rounded-full bg-white/35 blur-sm" />
      <svg className="relative ml-px shrink-0" width="19" height="24" viewBox="0 0 19 24">
        <path d="M1 12L3 6l5-4l5-1l4 4l-1 9l-3 4l-1-7l-3-3l-3 3l-1 10l-3 1l-2-5z" fill="#1237c8" />
        <path d="M3 11l3-5l5-3l4 1l-5 3l-4 5z" fill="#58a8ff" />
        <path d="M9 9l4 5h-2v8H7v-8H5z" fill="#e8e8ec" stroke="#8890a8" strokeWidth=".5" />
      </svg>
      <h1 className="relative ml-[5px] flex-1 truncate whitespace-pre font-['Open_Sans',sans-serif] text-sm leading-5 text-black">
        {"TradeStation 8.1 - STOXX_FTSEMIB - FTSEMIB C30 - [Chart Analysis - GS:FTSEMIB  240 min  [MCEDB] SPMIB FUTURES]"}
      </h1>
      <div className="relative mr-[2px] flex h-[25px] shrink-0 self-start overflow-hidden rounded-b-md border border-t-0 border-[#c8d2dc]">
        <button aria-label="Minimize" className="flex w-[38px] items-end justify-center border-r border-[#a0acb8] bg-linear-to-b from-[#9aa5b2] via-[#6c7a8a] via-45% to-[#2a3b4d] pb-[5px]">
          <span className="h-[6px] w-[17px] rounded-[1px] border border-[#4a5560] bg-white" />
        </button>
        <button aria-label="Restore" className="flex w-[36px] items-center justify-center border-r border-[#a0acb8] bg-linear-to-b from-[#9aa5b2] via-[#6c7a8a] via-45% to-[#2a3b4d]">
          <svg width="20" height="17" fill="#fff" stroke="#4a5560" fillRule="evenodd">
            <path d="M5.500.5h13v11h-13z" /><path d="M1.500 3.500h13v12h-13zM5.500 7.500v4h5v-4z" />
          </svg>
        </button>
        <button aria-label="Close" className="flex w-[63px] items-center justify-center bg-linear-to-b from-[#dda090] via-[#c8523a] via-45% to-[#b83c14]">
          <svg width="18" height="17" stroke="#5a3030" fill="#fff"><path d="M1.500 1h5L9 5l2.500-4h5l-5 7.500l5 7.500h-5L9 12l-2.500 4h-5l5-7.500z" /></svg>
        </button>
      </div>
    </header>
  );
}

const MENU: [string, string][] = [
  ["File", "w-[37px]"], ["Edit", "w-[40px]"], ["View", "w-[46px]"], ["Insert", "w-[50px]"],
  ["Format", "w-[61px]"], ["Drawing", "w-[70px]"], ["Window", "w-[69px]"], ["Help", "w-[40px]"],
];

function MenuBar() {
  return (
    <nav className="flex h-[30px] items-center border-b border-[#a8a8a8] bg-linear-to-b from-white via-[#eef0f8] via-30% to-[#d6ddf0]">
      <svg className="mr-[8px] ml-[7px] shrink-0" width="19" height="17" shapeRendering="crispEdges">
        <path d="M0 0h19v17H0z" /><path d="M0 0h19v2H0z" fill="#0000d0" />
        <path d="M1 11l2-3l2 2l2-5l2 4l2-5l2 3l2-2M2 14h12" fill="none" stroke="#00a000" />
        <path d="M17.500 3v13M1 15.500h16" stroke="#900" strokeDasharray="2 1" />
      </svg>
      {MENU.map(([m, w]) => (
        <button key={m} className={`shrink-0 text-left font-['Open_Sans',sans-serif] text-sm leading-5 text-[#101010] ${w}`}>{m}</button>
      ))}
      <MdiButtons className="ml-auto" />
    </nav>
  );
}

const TABS: [string, string][] = [
  ["STOX C164", "w-[86px]"], ["STOX C55", "w-[80px]"], ["STOX  C30", "w-[81px]"], ["STOX  8 Giorni", "w-[102px]"],
  ["STOX 4 giorni", "w-[97px]"], ["FTSEMIB C164", "w-[105px]"], ["FTSEMIB C55", "w-[98px]"], ["FTSEMIB C30", "w-[99px]"],
  ["FTSEMIB  8 Giorni", "w-[121px]"], ["FTSEMIB  4 giorni", "w-[118px]"], ["STOXX-FTSEMIB sito", "w-[137px]"],
  ["PERCENTUALE", "w-[111px]"], ["C164_3_Int", "w-[88px]"],
];
const ACTIVE = 7;

function ScrollAndTabs() {
  const nav = ["M2.500 2v8M9 2v8L4 6z", "M8 2v8L3 6z", "M4 2v8l5-4z", "M3 2v8l5-4zM9.500 2v8"];
  const btn = "flex items-center justify-center border border-[#a0a0a0] bg-linear-to-b from-[#f4f4f4] to-[#c8c8cc]";
  return (
    <>
      <div className="flex h-6 items-start border-t border-[#dcdcdc] bg-[#ececec] px-[3px] pt-px">
        <button aria-label="Scroll left" className={`h-[19px] w-5 ${btn}`}><svg width="6" height="8"><path d="M5 0v8L0 4z" fill="#444" /></svg></button>
        <span className="flex-1" />
        <button aria-label="Scroll thumb" className={`mr-px h-[19px] w-[19px] ${btn}`}>
          <svg width="9" height="9" stroke="#555" shapeRendering="crispEdges"><path d="M.5 0v9M4.500 0v9M8.500 0v9" /></svg>
        </button>
        <button aria-label="Scroll right" className={`h-[19px] w-[20px] ${btn}`}><svg width="6" height="8"><path d="M1 0v8L6 4z" fill="#444" /></svg></button>
      </div>
      <div className="flex h-[18px] overflow-hidden border-b-2 border-[#a0a0a0] bg-[#f0f0f0]">
        {nav.map((d, i) => (
          <button key={i} aria-label={["First tab", "Previous tab", "Next tab", "Last tab"][i]} className="flex w-[17px] shrink-0 items-center justify-center border border-t-black border-r-[#808080] border-b-[#808080] border-l-white">
            <svg width="12" height="12" fill="#777" stroke="#777" strokeWidth="1"><path d={d} /></svg>
          </button>
        ))}
        {TABS.map(([t, w], i) => (
          <button key={t} className={`relative flex shrink-0 items-center justify-center whitespace-pre border-b border-black pl-[6px] text-xs leading-[14px] text-black ${w} ${i === ACTIVE ? "bg-white font-bold" : "border-t bg-[#f0f0f0]"}`}>
            <svg className={`absolute left-0 ${i === ACTIVE ? "top-0" : "-top-px"}`} width="8" height="17" fill="none" stroke="#000">
              {i === ACTIVE + 1 ? (
                <><path d="M0 0h6L1 16H0z" fill="#fff" stroke="none" /><path d="M7 0L1.500 16M4.500 8L7 16" /></>
              ) : (
                <><path d="M0 0h2l5 16H0z" fill="#f0f0f0" stroke="none" /><path d="M1.500 0L7 16" />{i > 0 && <path d="M4 8L1 16" />}</>
              )}
            </svg>
            {t}
          </button>
        ))}
        <svg className="shrink-0" width="7" height="17" fill="none" stroke="#000"><path d="M5.500 0L0 16" /></svg>
        <span className="flex-1 border-t border-black" />
      </div>
    </>
  );
}

const STATUS: [string, string, string][] = [
  ["Acct:", "w-[51px]", ""], ["Open Psns:", "w-[91px]", ""], ["DT BP:", "w-[63px]", ""], ["Purch Pwr:", "w-[87px]", ""],
  ["Closed P/L:", "w-[93px]", ""], ["RT TE:", "w-[60px]", ""], ["Open P/L:", "w-[84px]", ""],
  ["ORDER BAR", "w-[88px]", "text-[#1c7c1c]"], ["MACROS", "w-[69px]", "text-[#1c7c1c]"],
];

function StatusBar() {
  return (
    <footer className="flex h-5 items-end overflow-hidden border-b border-[#5a6a80] bg-[#f0eded] font-['Open_Sans',sans-serif] text-sm leading-[18px] text-[#181818]">
      <span className="flex-1 truncate pl-[2px]">For Help, press F1</span>
      {STATUS.map(([t, w, c]) => (
        <span key={t} className={`shrink-0 whitespace-nowrap border-r border-[#cfcaca] pl-1 ${w} ${c}`}>{t}</span>
      ))}
      <span className="flex h-full w-[18px] shrink-0 justify-center border-r border-[#cfcaca] pt-px">
        <svg width="12" height="12"><circle cx="6" cy="6" r="5" fill="#d00000" stroke="#600" /><circle cx="4" cy="4" r="1.500" fill="#fff" /></svg>
      </span>
      <span className="w-[123px] shrink-0 whitespace-nowrap pl-1">30/11/2023 15:21</span>
    </footer>
  );
}

export default function App() {
  return (
    <div className="flex min-h-screen flex-col overflow-x-hidden bg-[#f0f0f0] font-['Liberation_Sans',Arial,sans-serif]">
      <TitleBar />
      <MenuBar />
      <Toolbar />
      <Chart />
      <ScrollAndTabs />
      <StatusBar />
    </div>
  );
}
